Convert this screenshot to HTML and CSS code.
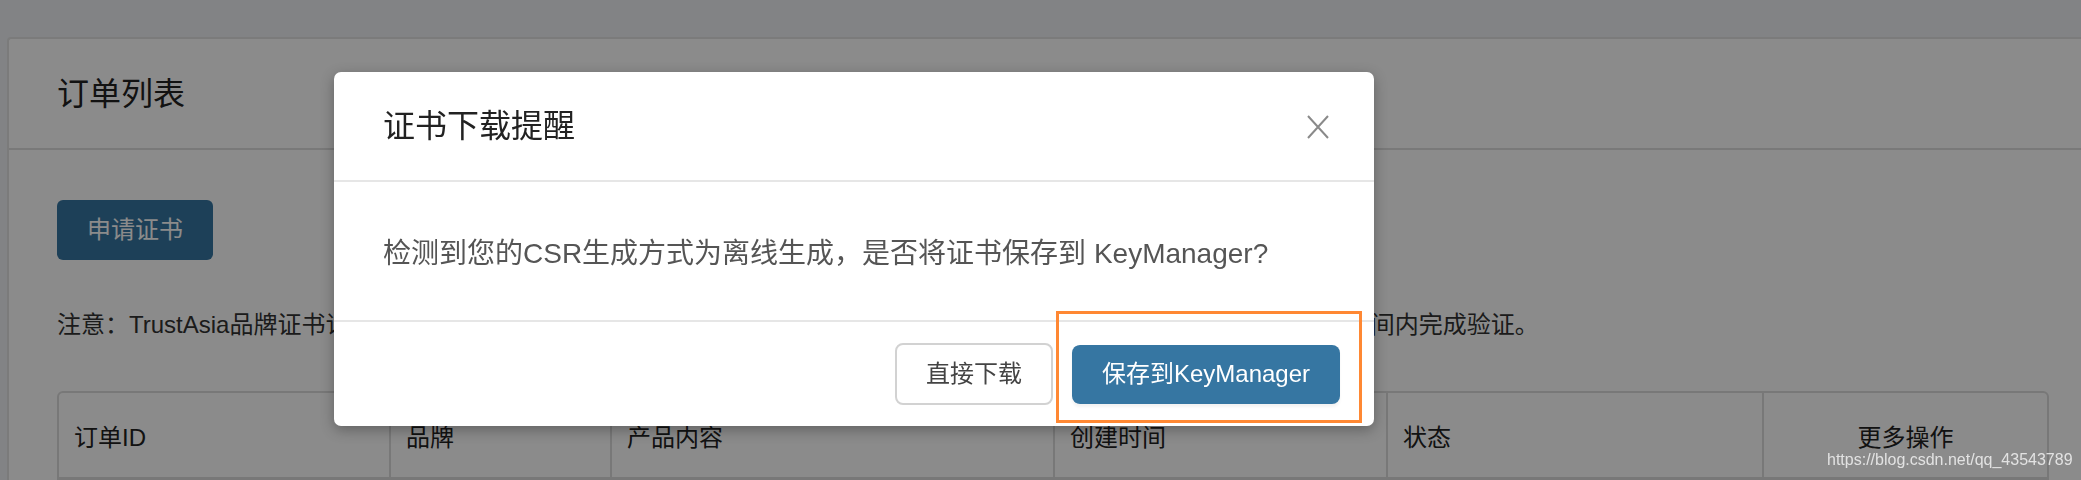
FILE: index.html
```html
<!DOCTYPE html>
<html lang="zh-CN">
<head>
<meta charset="utf-8">
<title>订单列表</title>
<link rel="stylesheet" href="styles.css">
</head>
<body>
<div class="page">
  <div class="card">
    <div class="card-header"><h2 class="card-title">订单列表</h2></div>
    <div class="card-body">
      <button class="btn btn-apply">申请证书</button>
      <p class="note">注意：TrustAsia品牌证书订单提交后，系统将向您的注册邮箱发送域名所有权验证信息，请您务必按照邮件提示在7天有效时间内完成验证。</p>
      <div class="table">
        <div class="th">订单ID</div>
        <div class="th">品牌</div>
        <div class="th">产品内容</div>
        <div class="th">创建时间</div>
        <div class="th">状态</div>
        <div class="th th-center">更多操作</div>
      </div>
    </div>
  </div>
</div>

<div class="backdrop"></div>

<div class="modal">
  <div class="modal-header">
    <h4 class="modal-title">证书下载提醒</h4>
    <button class="close" aria-label="关闭">
      <svg width="22" height="24" viewBox="0 0 22 24"><path d="M1 1 L21 23 M21 1 L1 23" stroke="#8a8a8a" stroke-width="2" fill="none"/></svg>
    </button>
  </div>
  <div class="modal-body">检测到您的CSR生成方式为离线生成，是否将证书保存到 KeyManager?</div>
  <div class="modal-footer">
    <button class="btn btn-default">直接下载</button>
    <button class="btn btn-save">保存到KeyManager</button>
  </div>
</div>

<div class="annotation"></div>
<div class="watermark">https://blog.csdn.net/qq_43543789</div>
</body>
</html>
```

FILE: styles.css
```css
html, body {
  margin: 0;
  height: 480px;
  overflow: hidden;
}
body {
  background: #eef0f5;
  font-family: "Liberation Sans", "Noto Sans CJK SC", sans-serif;
  color: #333;
  position: relative;
}
* { box-sizing: border-box; }

.page {
  padding: 37px 0 0 7px;
}
.card {
  background: #fff;
  border: 2px solid #e2e2e2;
  border-right: none;
  border-radius: 4px 0 0 0;
  height: 460px;
}
.card-header {
  height: 111px;
  padding: 0 48px;
  display: flex;
  align-items: center;
  border-bottom: 2px solid #dedede;
}
.card-title {
  margin: 0;
  font-size: 32px;
  font-weight: normal;
  line-height: 48px;
  color: #222;
}
.card-body {
  padding: 50px 0 0 48px;
}
.btn {
  font-family: "Liberation Sans", "Noto Sans CJK SC", sans-serif;
  font-size: 24px;
  line-height: 1;
  cursor: pointer;
  display: inline-flex;
  align-items: center;
  justify-content: center;
  padding: 0;
}
.btn-apply {
  width: 156px;
  height: 60px;
  border: none;
  border-radius: 6px;
  background: #3676a2;
  color: #fff;
}
.note {
  margin: 47px 0 0;
  font-size: 24px;
  line-height: 36px;
  white-space: nowrap;
  color: #333;
}
.table {
  margin-top: 48px;
  width: 1992px;
  display: grid;
  grid-template-columns: 332px 221px 443px 333px 376px 283px;
  border: 2px solid #dcdcdc;
  border-radius: 6px 6px 0 0;
}
.th {
  height: 86px;
  display: flex;
  align-items: center;
  padding-left: 15px;
  font-size: 24px;
  color: #222;
  border-right: 2px solid #dcdcdc;
  border-bottom: 2px solid #dcdcdc;
}
.th-center {
  border-right: none;
  justify-content: center;
  padding-left: 0;
}

.backdrop {
  position: fixed;
  inset: 0;
  background: rgba(0, 0, 0, 0.455);
}

.modal {
  position: absolute;
  left: 334px;
  top: 72px;
  width: 1040px;
  height: 354px;
  background: #fff;
  border-radius: 7px;
  box-shadow: 0 4px 14px rgba(0, 0, 0, 0.3);
  overflow: hidden;
}
.modal-header {
  height: 110px;
  padding: 0 45px 0 49px;
  display: flex;
  align-items: center;
  justify-content: space-between;
  border-bottom: 2px solid #e6e6e6;
}
.modal-title {
  margin: 0;
  font-size: 32px;
  font-weight: normal;
  line-height: 48px;
  color: #222;
}
.close {
  border: none;
  background: none;
  padding: 0;
  width: 22px;
  height: 24px;
  display: flex;
  margin-top: 2px;
}
.modal-body {
  height: 138px;
  padding: 0 49px;
  display: flex;
  align-items: center;
  font-size: 28px;
  color: #555;
  white-space: nowrap;
}
.modal-footer {
  height: 106px;
  border-top: 2px solid #e6e6e6;
  display: flex;
  justify-content: flex-end;
  align-items: center;
  gap: 19px;
  padding-right: 34px;
}
.btn-default {
  width: 158px;
  height: 62px;
  border: 2px solid #d2d2d2;
  border-radius: 8px;
  background: #fff;
  color: #444;
}
.btn-save {
  width: 268px;
  height: 59px;
  border: none;
  border-radius: 8px;
  background: #3676a2;
  color: #fff;
  box-shadow: 0 3px 3px rgba(0, 0, 0, 0.05);
}

.annotation {
  position: absolute;
  left: 1056px;
  top: 311px;
  width: 306px;
  height: 112px;
  border: 3px solid #ff8833;
}
.watermark {
  position: absolute;
  left: 1827px;
  top: 450px;
  font-size: 16px;
  line-height: 20px;
  color: rgba(255, 255, 255, 0.75);
  white-space: nowrap;
}
```
